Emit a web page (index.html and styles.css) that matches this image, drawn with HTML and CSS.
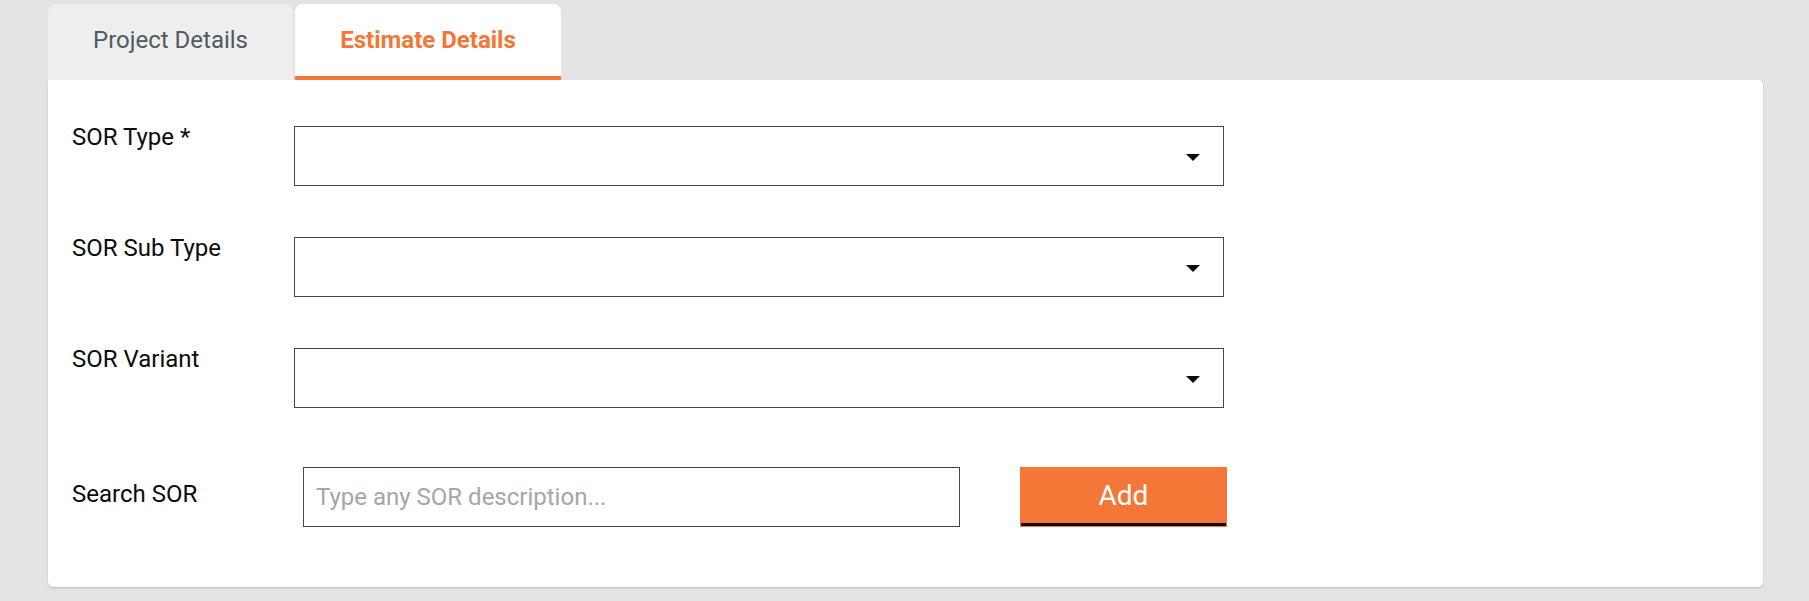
FILE: index.html
```html
<!DOCTYPE html>
<html lang="en">
<head>
<meta charset="utf-8">
<title>Estimate Details</title>
<link rel="stylesheet" href="styles.css">
</head>
<body>
<div class="page">
  <div class="tabs">
    <div class="tab">Project Details</div>
    <div class="tab tab-active">Estimate Details</div>
  </div>
  <div class="card">
    <div class="row">
      <div class="label">SOR Type *</div>
      <div class="select">
        <svg class="caret" width="14" height="7" viewBox="0 0 14 7"><path d="M0 0H14L7 7Z" fill="#0b0c0c"/></svg>
      </div>
    </div>
    <div class="row">
      <div class="label">SOR Sub Type</div>
      <div class="select">
        <svg class="caret" width="14" height="7" viewBox="0 0 14 7"><path d="M0 0H14L7 7Z" fill="#0b0c0c"/></svg>
      </div>
    </div>
    <div class="row">
      <div class="label">SOR Variant</div>
      <div class="select">
        <svg class="caret" width="14" height="7" viewBox="0 0 14 7"><path d="M0 0H14L7 7Z" fill="#0b0c0c"/></svg>
      </div>
    </div>
    <div class="row row-search">
      <div class="label label-search">Search SOR</div>
      <input class="search" type="text" placeholder="Type any SOR description...">
      <button class="add" type="button">Add</button>
    </div>
  </div>
</div>
</body>
</html>
```

FILE: styles.css
```css
* { box-sizing: border-box; }

html, body {
  margin: 0;
  padding: 0;
}

body {
  background: #e3e3e3;
  font-family: Roboto, "Noto Sans", "Liberation Sans", sans-serif;
  color: #0b0c0c;
  width: 1809px;
  height: 601px;
  overflow: hidden;
}

.page {
  padding: 4px 46px 0 48px;
}

.tabs {
  display: flex;
  gap: 2px;
}

.tab {
  height: 76px;
  padding: 0 40px 4px;
  display: flex;
  align-items: center;
  justify-content: center;
  background: #eeeeee;
  color: #505a5f;
  font-size: 24px;
  line-height: 28px;
  border-radius: 8px 8px 0 0;
  width: 245px;
}

.tab-active {
  width: 266px;
  background: #ffffff;
  color: #f47738;
  font-weight: 700;
  padding-bottom: 0;
  border-bottom: 4px solid #f47738;
}

.card {
  background: #ffffff;
  border-radius: 0 5px 5px 5px;
  box-shadow: 0 1px 2px rgba(0, 0, 0, 0.18);
  padding: 46px 24px 60px 24px;
  height: 507px;
}

.row {
  display: flex;
  align-items: flex-start;
  margin-bottom: 51px;
}

.row:nth-child(3) {
  margin-bottom: 59px;
}

.row-search {
  margin-bottom: 0;
}

.label {
  width: 222px;
  flex: none;
  font-size: 24px;
  line-height: 23px;
  color: #0b0c0c;
}

.select {
  width: 930px;
  height: 60px;
  border: 1px solid #464646;
  background: #ffffff;
  display: flex;
  align-items: center;
  justify-content: flex-end;
  padding-right: 23px;
}

.caret {
  display: block;
  margin-top: 3px;
}

.label-search {
  width: 231px;
  line-height: 28px;
  margin-top: 13px;
}

.search {
  width: 657px;
  height: 60px;
  border: 1px solid #464646;
  border-radius: 0;
  padding: 0 12px;
  font-family: Roboto, "Noto Sans", "Liberation Sans", sans-serif;
  font-size: 24px;
  color: #0b0c0c;
  outline: none;
  margin: 0;
}

.search::placeholder {
  color: #a3a6ad;
  opacity: 1;
}

.add {
  margin: 0 0 0 60px;
  width: 207px;
  height: 60px;
  background: #f47738;
  border: 1px solid #f47738;
  border-radius: 0;
  box-shadow: inset 0 -3px 0 #0b0c0c;
  color: #ffffff;
  font-family: Roboto, "Noto Sans", "Liberation Sans", sans-serif;
  font-size: 28px;
  line-height: 30px;
  padding: 0 0 2px;
  cursor: pointer;
}
```
